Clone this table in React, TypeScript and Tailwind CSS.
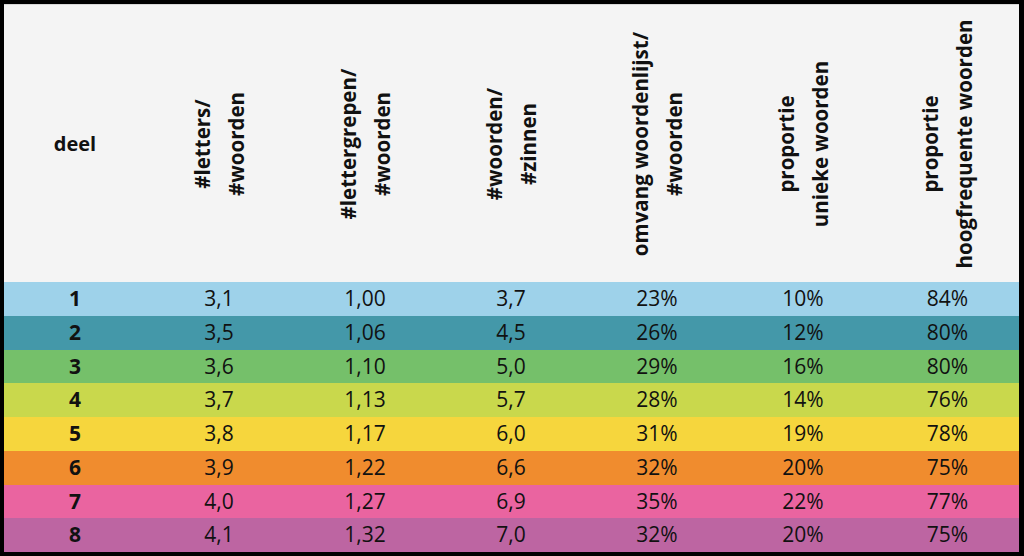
const headers: string[][] = [
  ['#letters/', '#woorden'],
  ['#lettergrepen/', '#woorden'],
  ['#woorden/', '#zinnen'],
  ['omvang woordenlijst/', '#woorden'],
  ['proportie', 'unieke woorden'],
  ['proportie', 'hoogfrequente woorden'],
];

const rows = [
  { deel: '1', bg: 'bg-[#9ed2ea]', values: ['3,1', '1,00', '3,7', '23%', '10%', '84%'] },
  { deel: '2', bg: 'bg-[#4498a9]', values: ['3,5', '1,06', '4,5', '26%', '12%', '80%'] },
  { deel: '3', bg: 'bg-[#75c06a]', values: ['3,6', '1,10', '5,0', '29%', '16%', '80%'] },
  { deel: '4', bg: 'bg-[#c9d84c]', values: ['3,7', '1,13', '5,7', '28%', '14%', '76%'] },
  { deel: '5', bg: 'bg-[#f6d63d]', values: ['3,8', '1,17', '6,0', '31%', '19%', '78%'] },
  { deel: '6', bg: 'bg-[#f08c2e]', values: ['3,9', '1,22', '6,6', '32%', '20%', '75%'] },
  { deel: '7', bg: 'bg-[#ea64a0]', values: ['4,0', '1,27', '6,9', '35%', '22%', '77%'] },
  { deel: '8', bg: 'bg-[#bd65a2]', values: ['4,1', '1,32', '7,0', '32%', '20%', '75%'] },
];

const cols = 'grid grid-cols-[142px_146px_146px_146px_146px_146px_minmax(0,1fr)]';

const App = () => {
  return (
    <div className="w-[1024px] h-[556px] bg-white font-['Open_Sans',sans-serif] text-[#111] overflow-hidden">
      <div className="w-full h-full flex flex-col border-t-4 border-l-4 border-r-[5px] border-b-4 border-black">
        {/* header */}
        <div className={`${cols} h-[278px] bg-[#f4f4f4] border-t border-[#d8d8d8]`}>
          <div className="min-w-0 flex items-center justify-center">
            <span className="text-[20px] font-bold">deel</span>
          </div>
          {headers.map((lines, i) => (
            <div key={i} className="min-w-0 flex items-center justify-center">
              <div className="shrink-0 -rotate-90 whitespace-nowrap text-center text-[20.5px] font-bold leading-[34px]">
                {lines.map((l, j) => (
                  <div key={j}>{l}</div>
                ))}
              </div>
            </div>
          ))}
        </div>

        {/* data rows */}
        <div className="flex-1 flex flex-col">
          {rows.map((r) => (
            <div key={r.deel} className={`${cols} ${r.bg} flex-1 items-center text-[21px]`}>
              <div className="min-w-0 text-center font-bold">{r.deel}</div>
              {r.values.map((v, i) => (
                <div key={i} className="min-w-0 text-center">{v}</div>
              ))}
            </div>
          ))}
        </div>
      </div>
    </div>
  );
};

export default App;
